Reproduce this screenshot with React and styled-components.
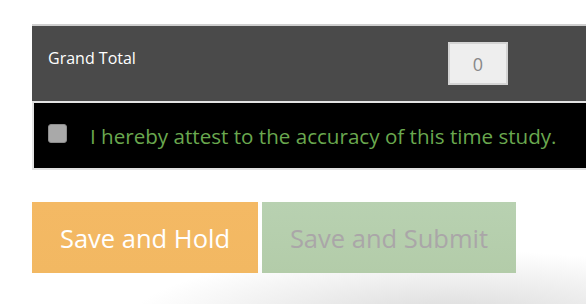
import styled, { createGlobalStyle } from "styled-components";
import React, { useState } from "react";

const GlobalStyle = createGlobalStyle`
  html, body {
    margin: 0;
    padding: 0;
    background: #fff;
    overflow: hidden;
  }
  body {
    font-family: "Open Sans", "Liberation Sans", sans-serif;
  }
`;

function App() {
  const [attested, setAttested] = useState(false);
  const total = 0;

  return (
    <Page>
      <GlobalStyle />
      <Table>
        <TotalRow>
          <TotalLabel>Grand Total</TotalLabel>
          <TotalInput type="text" value={total} readOnly />
        </TotalRow>
        <AttestRow>
          <Check
            type="checkbox"
            checked={attested}
            onChange={(e) => setAttested(e.target.checked)}
          />
          <AttestText>I hereby attest to the accuracy of this time study.</AttestText>
        </AttestRow>
      </Table>
      <Actions>
        <ActionButton $variant="hold">Save and Hold</ActionButton>
        <ActionButton $variant="submit" disabled={!attested}>
          Save and Submit
        </ActionButton>
      </Actions>
    </Page>
  );
}

const Page = styled.div`
  height: 304px;
  box-sizing: border-box;
  padding: 24px 0 0 32px;
  background: radial-gradient(
    ellipse 320px 70px at 450px 320px,
    #d9d9d9 0%,
    rgba(255, 255, 255, 0) 100%
  );
`;

const Table = styled.div`
  width: 554px;
`;

const TotalRow = styled.div`
  display: flex;
  align-items: center;
  height: 75px;
  border-top: 2px solid #cfcfcf;
  background: #4a4a4a;
`;

const TotalLabel = styled.div`
  flex: 0 0 416px;
  box-sizing: border-box;
  align-self: flex-start;
  padding: 21px 0 0 16px;
  color: #fff;
  font-size: 16px;
`;

const TotalInput = styled.input`
  width: 60px;
  height: 43px;
  box-sizing: border-box;
  border: 2px solid #d4d4d4;
  background: #eeeeee;
  color: #888;
  font-family: "Open Sans", sans-serif;
  font-size: 18px;
  text-align: center;
  outline: none;
  padding: 0;
`;

const AttestRow = styled.div`
  display: flex;
  align-items: center;
  height: 65px;
  border: 2px solid #e2e2e2;
  border-right: none;
  background: #000;
  padding-left: 14px;
`;

const Check = styled.input`
  appearance: none;
  width: 19px;
  height: 19px;
  margin: 0 23px 4px 0;
  border: 1px solid #8c8c8c;
  border-radius: 3px;
  background: #a9a9a9;
  box-sizing: border-box;

  &:checked {
    background: #6aa84f;
  }
`;

const AttestText = styled.span`
  color: #6aa84f;
  font-size: 20.6px;
  white-space: nowrap;
`;

const Actions = styled.div`
  display: flex;
  gap: 4px;
  margin-top: 32px;
`;

const ActionButton = styled.button`
  height: 71px;
  width: ${(p) => (p.$variant === "hold" ? "226px" : "254px")};
  border: none;
  padding: 0;
  font-family: "Open Sans", sans-serif;
  font-size: 25.5px;
  color: ${(p) => (p.$variant === "hold" ? "#fff" : "#aaa6a8")};
  background: ${(p) =>
    p.$variant === "hold"
      ? "linear-gradient(#f4b964, #f2b862)"
      : "linear-gradient(#b8d1b1, #b3cca9)"};
  cursor: pointer;

  &:disabled {
    cursor: default;
  }
`;

export default App;
